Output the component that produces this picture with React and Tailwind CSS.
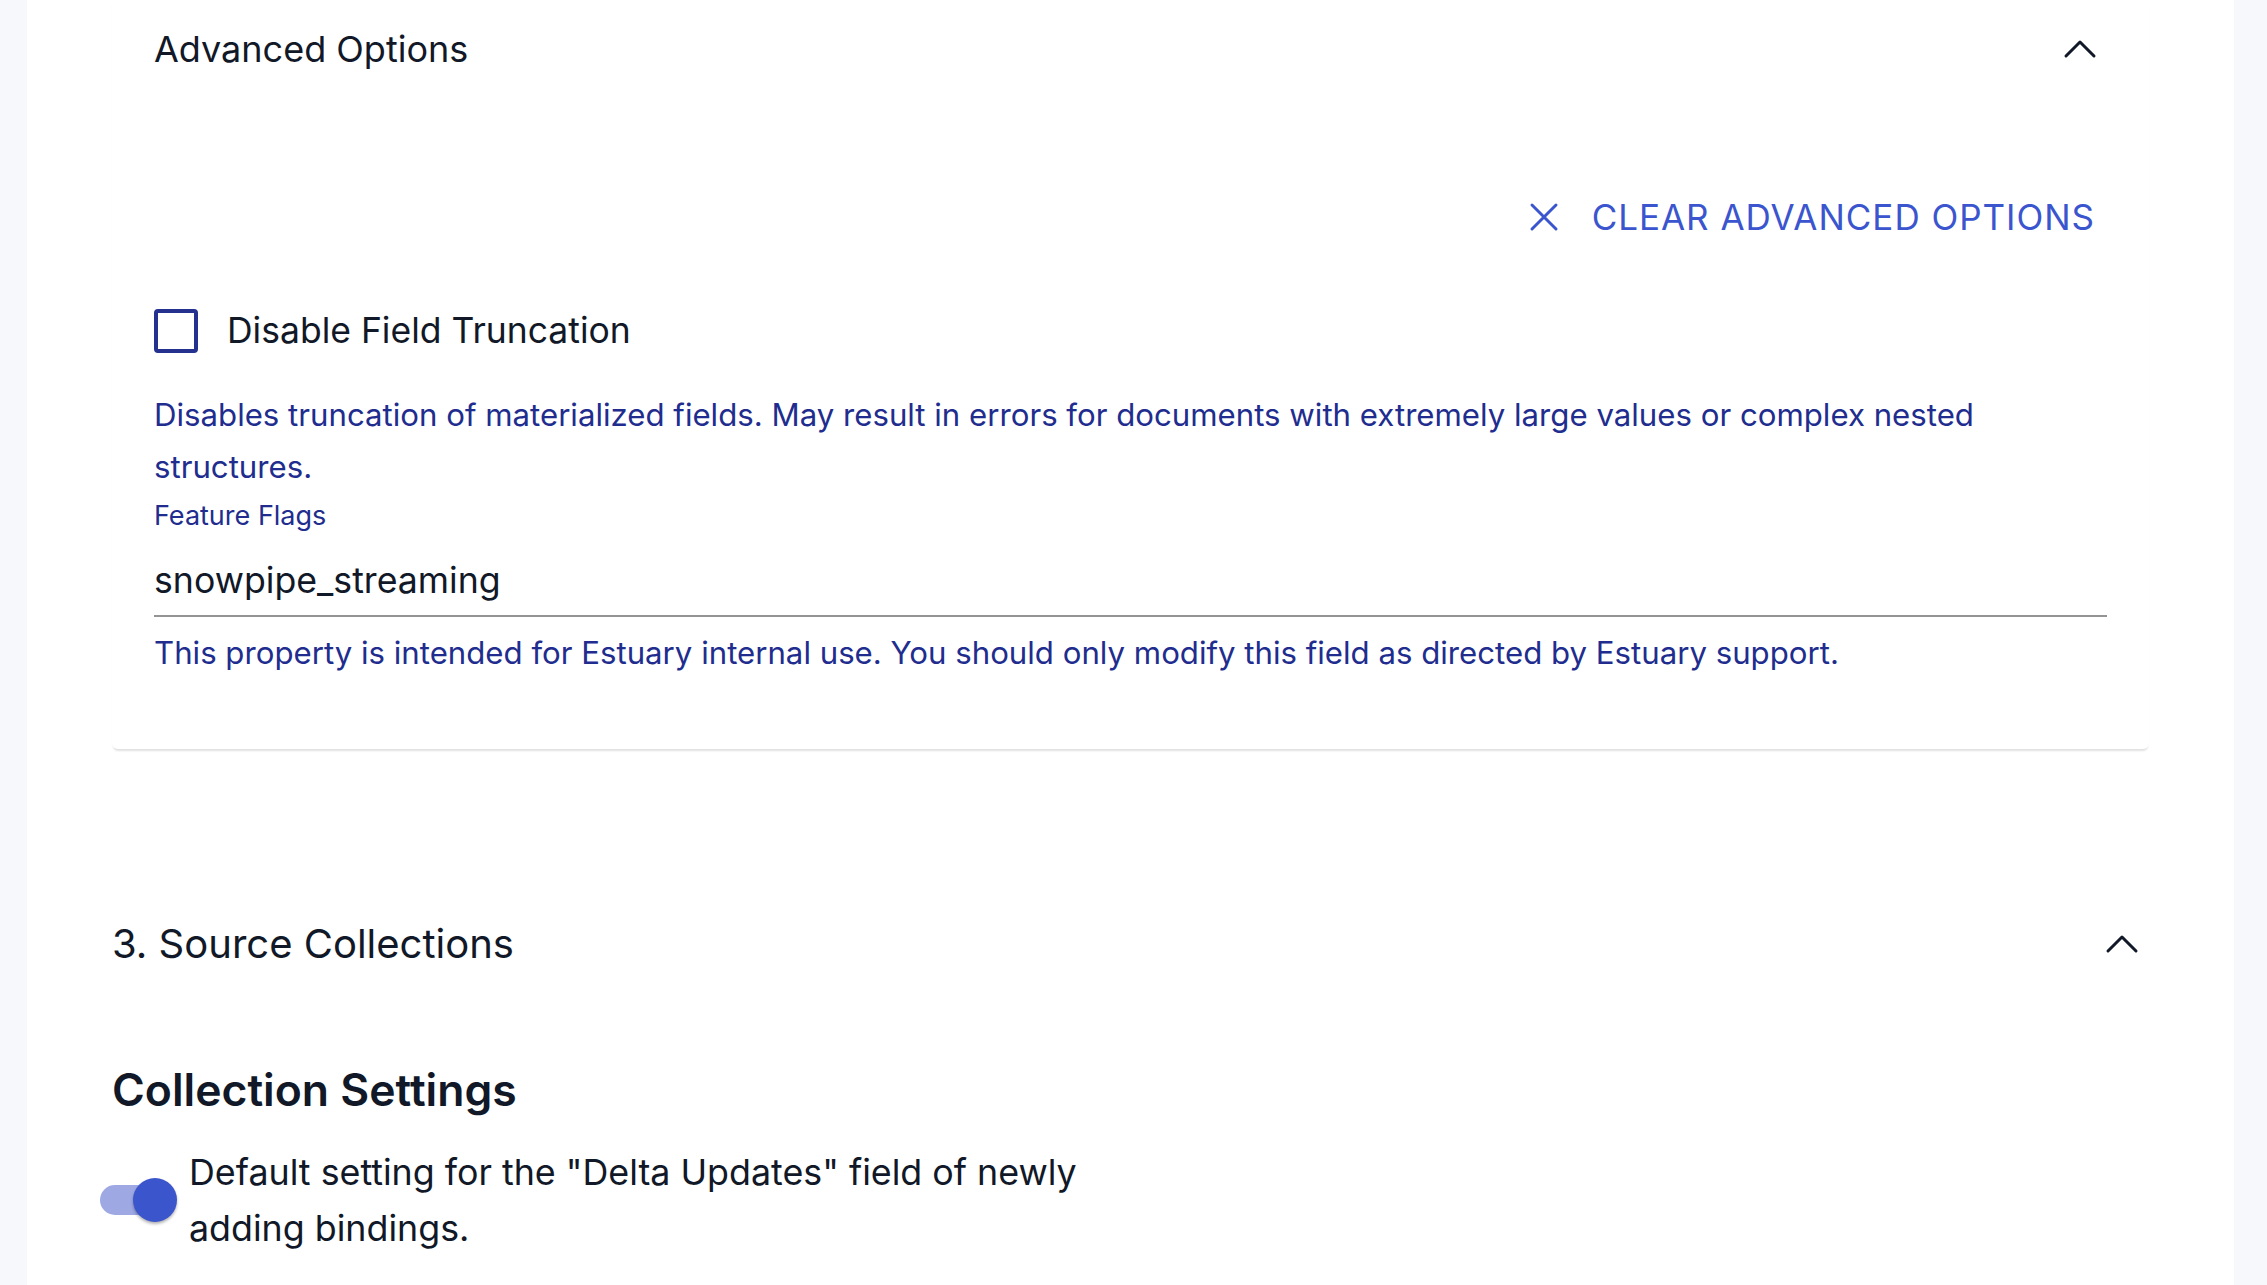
import React from 'react';

const font = { fontFamily: 'Inter, "Noto Sans", sans-serif' };

function ChevronUp() {
  return (
    <svg width="34" height="20" viewBox="0 0 34 20" fill="none" className="text-[#111827]">
      <polyline points="3,17 17,3 31,17" stroke="currentColor" strokeWidth="3" strokeLinecap="round" strokeLinejoin="round" />
    </svg>
  );
}

function XIcon() {
  return (
    <svg width="30" height="30" viewBox="0 0 30 30" fill="none" className="text-[#3b55cf]">
      <path d="M3 3L27 27M27 3L3 27" stroke="currentColor" strokeWidth="3" strokeLinecap="round" />
    </svg>
  );
}

export default function App() {
  return (
    <div className="w-full h-[1285px] bg-[#f7f8fc] flex overflow-hidden" style={font}>
      <div className="w-[27px] shrink-0" />
      <div className="flex-1 bg-white px-[85px]">
        {/* advanced options card */}
        <div className="rounded-b-[6px] shadow-[0_3px_2px_-1px_rgba(0,0,0,0.12)] px-[42px] pb-[74px]">
          <div className="h-[98px] flex items-center justify-between pr-[10px]">
            <span className="text-[36px] text-[#111827]">Advanced Options</span>
            <ChevronUp />
          </div>

          <div className="mt-[89px] h-[60px] flex items-center justify-end">
            <button className="flex items-center gap-[33px] text-[#3b55cf] pr-[12px]">
              <XIcon />
              <span className="text-[35px] tracking-[0.028em] uppercase">Clear Advanced Options</span>
            </button>
          </div>

          <div className="mt-[54px] h-[60px] flex items-center gap-[29px]">
            <div className="w-[44px] h-[44px] border-[4px] border-[#24318f] rounded-[4px]" />
            <span className="text-[35.5px] text-[#111827]">Disable Field Truncation</span>
          </div>

          <p className="mt-[28px] text-[31.2px] leading-[52px] text-[#212d8e] whitespace-nowrap">
            Disables truncation of materialized fields. May result in errors for documents with extremely large values or complex nested
            <br />
            structures.
          </p>

          <div className="mt-[7px] text-[27px] leading-[32px] text-[#212d8e]">Feature Flags</div>

          <div className="mt-[24px] pb-[11px] border-b-2 border-[#949494]">
            <div className="text-[35.7px] leading-[48px] text-[#111827]">snowpipe_streaming</div>
          </div>

          <p className="mt-[14px] text-[31.2px] leading-[44px] text-[#212d8e]">
            This property is intended for Estuary internal use. You should only modify this field as directed by Estuary support.
          </p>
        </div>

        {/* source collections */}
        <div className="mt-[155px] h-[80px] flex items-center justify-between pr-[10px]">
          <span className="text-[40px] text-[#111827]">3. Source Collections</span>
          <ChevronUp />
        </div>

        <h2 className="mt-[78px] text-[44.5px] leading-[56px] font-semibold text-[#111827]">Collection Settings</h2>

        <div className="mt-[26px] flex items-center">
          <div className="w-[75px] h-[48px] relative shrink-0 -ml-[12px] mr-[14px]">
            <div className="absolute left-0 top-[9px] w-[70px] h-[30px] rounded-full bg-[#9ea8e3]" />
            <div className="absolute right-[-2px] top-[2px] w-[44px] h-[44px] rounded-full bg-[#3b55cc] shadow-[0_2px_3px_rgba(0,0,0,0.3)]" />
          </div>
          <p className="text-[35.8px] leading-[56px] text-[#111827]">
            Default setting for the "Delta Updates" field of newly
            <br />
            adding bindings.
          </p>
        </div>
      </div>
      <div className="w-[33px] shrink-0" />
    </div>
  );
}
